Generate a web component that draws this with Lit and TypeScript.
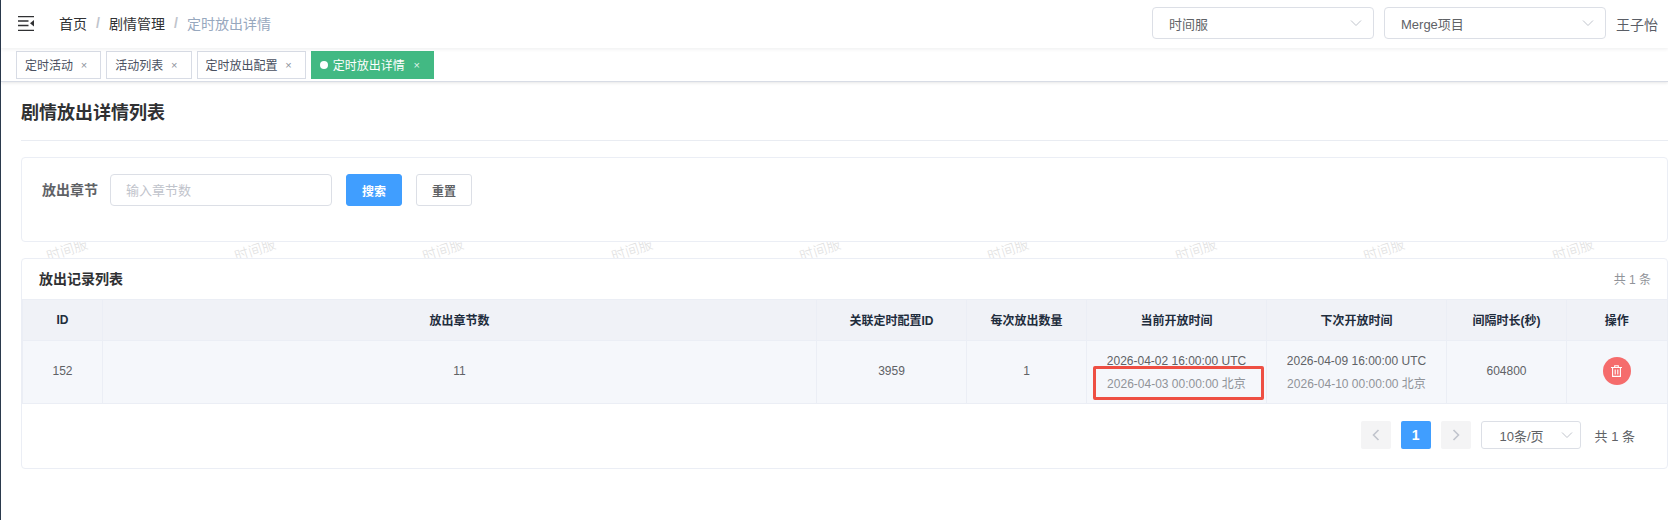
import { LitElement, html, css } from "lit";
import { customElement } from "lit/decorators.js";

const chevron = html`<svg class="chev" viewBox="0 0 12 8" width="12" height="8"><path d="M1 1.5 6 6.5 11 1.5" fill="none" stroke="#c0c4cc" stroke-width="1"/></svg>`;

@customElement("app-root")
export class AppRoot extends LitElement {
  static styles = css`
    :host { display: block; width: 1668px; height: 520px; background: #fff; overflow: hidden;
      font-family: "Liberation Sans", "Noto Sans CJK SC", sans-serif; color: #606266; }
    * { box-sizing: border-box; }
    .app { display: flex; height: 520px; }
    .rail { flex: 0 0 1px; background: #2b3a4d; }
    .body { flex: 1; min-width: 0; display: flex; flex-direction: column; }

    .nav { height: 48px; display: flex; align-items: center; padding: 0 10px 0 17px; background: #fff;
      box-shadow: 0 1px 4px rgba(0,21,41,.08); position: relative; z-index: 2; }
    .burger { display: block; width: 16px; height: 15px; margin-bottom: 2px; }
    .crumbs { display: flex; align-items: center; margin-left: 25px; font-size: 14px; color: #303133; margin-bottom: 2px; }
    .crumbs .sep { color: #c0c4cc; width: 22px; text-align: center; font-weight: 700; }
    .crumbs .cur { color: #97a8be; }
    .right { margin-left: auto; display: flex; align-items: center; }
    .select { display: flex; align-items: center; justify-content: space-between; width: 222px; height: 32px;
      border: 1px solid #dcdfe6; border-radius: 4px; padding: 0 11px 0 16px; font-size: 13px; color: #606266; margin-right: 10px; margin-bottom: 2px; }
    .user { font-size: 14px; color: #5a5e66; line-height: 20px; margin-top: 2px; }

    .tags { height: 34px; display: flex; align-items: center; gap: 5px; padding-left: 15px; background: #fff;
      border-bottom: 1px solid #d8dce5; box-shadow: 0 1px 3px rgba(0,0,0,.1); position: relative; z-index: 1; }
    .tag { height: 28px; display: flex; align-items: center; border: 1px solid #d8dce5; padding: 0 9.25px 0 8px; font-size: 12px; color: #495060; }
    .tag .x { width: 14px; margin-left: 4px; text-align: center; font-size: 11px; color: #8d939c; }
    .tag.on { background: #42b983; border-color: #42b983; color: #fff; }
    .tag.on .x { color: #dff3ea; margin-left: 5px; }
    .dot { width: 8px; height: 8px; border-radius: 50%; background: #fff; margin-right: 5px; }

    .main { padding-left: 20px; flex: 1; }
    .title { height: 59px; padding-top: 20px; border-bottom: 1px solid #e9ecf2; font-size: 18px; font-weight: 700; line-height: 22px; color: #303133; margin-bottom: 16px; }
    .card { border: 1px solid #ebeef5; border-radius: 4px; background: #fff; }
    .search { height: 85px; padding: 16px 20px; display: flex; align-items: flex-start; }
    .search label { font-size: 14px; font-weight: 700; color: #606266; line-height: 32px; width: 56px; margin-right: 12px; }
    .search input { width: 222px; height: 32px; border: 1px solid #dcdfe6; border-radius: 4px; padding: 0 15px; font: inherit; font-size: 13px; outline: none; }
    .search input::placeholder { color: #bfc3cb; }
    .btn { width: 56px; height: 32px; margin-left: 14px; border: 1px solid #dcdfe6; border-radius: 3px; display: flex; align-items: center; justify-content: center; font-size: 12px; font-weight: 700; color: #606266; background: #fff; }
    .btn.primary { background: #409eff; border-color: #409eff; color: #fff; }

    .wm { height: 16px; overflow: hidden; display: flex; padding-left: 25px; }
    .wm span { flex: 0 0 188.2px; font-size: 14px; line-height: 16px; color: #dedede; }
    .wm i { display: inline-block; font-style: normal; font-weight: 300; transform: rotate(-18deg); transform-origin: center; }

    .list { height: 211px; }
    .list-head { height: 40px; display: flex; align-items: center; justify-content: space-between; padding: 0 16px 2px 17px; }
    .list-head b { font-size: 14px; color: #303133; }
    .list-head span { font-size: 12px; color: #909399; }
    table { border-collapse: collapse; table-layout: fixed; width: 1644px; font-size: 12px; }
    th { height: 41px; background: #f0f2f7; color: #1f2d3d; font-weight: 700; border: 1px solid #ebeef5; padding: 0 0 1px; }
    td { height: 63px; background: #f5f7fb; text-align: center; border: 1px solid #ebeef5; padding: 0 0 2px; color: #606266; position: relative; }
    th:last-child, td:last-child { border-right: 0; }
    .lines { padding-top: 3px; line-height: 23px; }
    .lines div:last-child { color: #909399; }
    .mark { position: absolute; left: 6px; top: 25px; width: 171px; height: 34px; border: 3px solid #ee4f43; border-radius: 2px; }
    .del { width: 28px; height: 28px; margin: 0 auto; border-radius: 50%; background: #f56c6c; display: flex; align-items: center; justify-content: center; }

    .pager { display: flex; align-items: center; justify-content: flex-end; padding: 17px 32px 0 0; font-size: 13px; }
    .pg { width: 30px; height: 28px; margin-right: 10px; background: #f4f4f5; border-radius: 2px; display: flex; align-items: center; justify-content: center; font-weight: 700; font-size: 14px; }
    .pg.on { background: #409eff; color: #fff; }
    .size { width: 100px; height: 28px; border: 1px solid #dcdfe6; border-radius: 3px; display: flex; align-items: center; justify-content: space-between; padding: 0 7px 0 18px; font-size: 13px; color: #606266; }
    .total { margin-left: 14px; color: #606266; }
  `;

  render() {
    const tags = ["定时活动", "活动列表", "定时放出配置"];
    const cols = [80, 714, 150, 120, 180, 180, 120, 100];
    const heads = ["ID", "放出章节数", "关联定时配置ID", "每次放出数量", "当前开放时间", "下次开放时间", "间隔时长(秒)", "操作"];
    return html`<div class="app">
      <div class="rail"></div>
      <div class="body">
        <header class="nav">
          <svg class="burger" viewBox="0 0 16 15">
            <path d="M0 .5h16M0 14.5h16M0 5h10.5M0 9.5h10.5" stroke="#303133" stroke-width="1.4" fill="none"/>
            <path d="M16 4v6.5L12 7.2z" fill="#303133"/>
          </svg>
          <div class="crumbs"><span>首页</span><span class="sep">/</span><span>剧情管理</span><span class="sep">/</span><span class="cur">定时放出详情</span></div>
          <div class="right">
            <div class="select"><span>时间服</span>${chevron}</div>
            <div class="select"><span>Merge项目</span>${chevron}</div>
            <div class="user">王子怡</div>
          </div>
        </header>
        <div class="tags">
          ${tags.map((t) => html`<div class="tag">${t}<span class="x">×</span></div>`)}
          <div class="tag on"><span class="dot"></span>定时放出详情<span class="x">×</span></div>
        </div>
        <main class="main">
          <div class="title">剧情放出详情列表</div>
          <section class="card search">
            <label>放出章节</label>
            <input placeholder="输入章节数" />
            <div class="btn primary">搜索</div>
            <div class="btn">重置</div>
          </section>
          <div class="wm">${Array.from({ length: 9 }, () => html`<span><i>时间服</i></span>`)}</div>
          <section class="card list">
            <div class="list-head"><b>放出记录列表</b><span>共 1 条</span></div>
            <table>
              <colgroup>${cols.map((w) => html`<col style="width:${w}px" />`)}</colgroup>
              <thead><tr>${heads.map((h) => html`<th>${h}</th>`)}</tr></thead>
              <tbody>
                <tr>
                  <td>152</td>
                  <td>11</td>
                  <td>3959</td>
                  <td>1</td>
                  <td><div class="lines"><div>2026-04-02 16:00:00 UTC</div><div>2026-04-03 00:00:00 北京</div></div><div class="mark"></div></td>
                  <td><div class="lines"><div>2026-04-09 16:00:00 UTC</div><div>2026-04-10 00:00:00 北京</div></div></td>
                  <td>604800</td>
                  <td><div class="del">
                    <svg width="11" height="12" viewBox="0 0 11 12" fill="none" stroke="#fff" stroke-width="1.1">
                      <path d="M0 2.5h11M3.7 2.3V.7h3.6v1.6M1.6 2.5v8.9h7.8V2.5M4.2 4.6v4.8M6.8 4.6v4.8"/>
                    </svg>
                  </div></td>
                </tr>
              </tbody>
            </table>
            <div class="pager">
              <div class="pg"><svg width="8" height="12" viewBox="0 0 8 12"><path d="M6.5 1 1.5 6l5 5" fill="none" stroke="#c0c4cc" stroke-width="1.6"/></svg></div>
              <div class="pg on">1</div>
              <div class="pg"><svg width="8" height="12" viewBox="0 0 8 12"><path d="M1.5 1l5 5-5 5" fill="none" stroke="#c0c4cc" stroke-width="1.6"/></svg></div>
              <div class="size"><span>10条/页</span>${chevron}</div>
              <div class="total">共 1 条</div>
            </div>
          </section>
        </main>
      </div>
    </div>`;
  }
}
